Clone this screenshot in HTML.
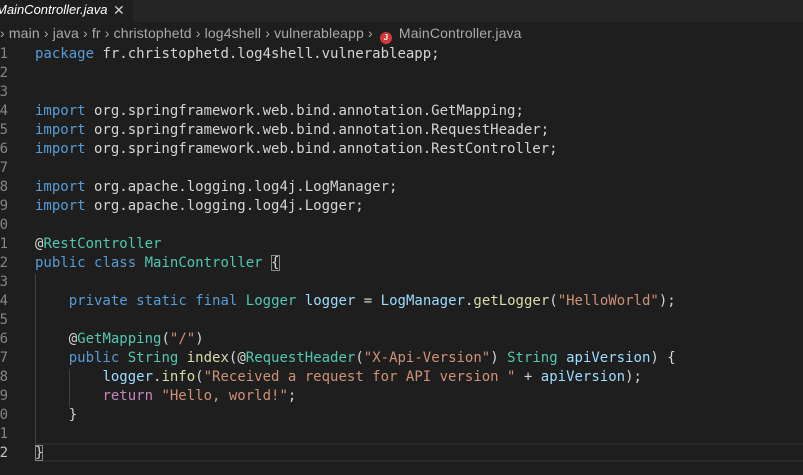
<!DOCTYPE html>
<html><head><meta charset="utf-8"><style>
*{margin:0;padding:0;box-sizing:border-box}
body{width:803px;height:475px;background:#1e1e1e;overflow:hidden;position:relative;font-family:"DejaVu Sans Mono","Liberation Mono",monospace;font-size:14px}
.tabs{position:absolute;left:0;top:0;width:803px;height:22px;background:#252526}
.tab{position:absolute;left:-4px;top:0;width:137px;height:22px;background:#1e1e1e;color:#fff;font:italic 13px "Liberation Sans",sans-serif;line-height:20px;padding-left:0}
.tab .x{position:absolute;left:117px;top:0;font-style:normal;font-size:14px;color:#ccc}
.bc{position:absolute;left:0;top:24px;height:18px;color:#a9a9a9;font:14px "Liberation Sans",sans-serif;letter-spacing:0.15px;line-height:18px;white-space:pre}
.bc .j{display:inline-block;width:12px;height:12px;border-radius:50%;background:#d0393b;vertical-align:-2px;color:#fff;font-size:8px;text-align:center;line-height:12px;font-weight:bold;margin:0 3px}
.ln{position:absolute;right:795px;color:#858585;height:19px;line-height:19px;text-align:right;white-space:pre}
.code{position:absolute;left:35px;height:19px;line-height:19px;white-space:pre;color:#d4d4d4}
.k{color:#569cd6}.t{color:#4ec9b0}.s{color:#ce9178}.f{color:#dcdcaa}.v{color:#9cdcfe}.r{color:#c586c0}
.cur{position:absolute;left:35px;top:443px;width:768px;height:19px;border-top:2px solid #282828;border-bottom:2px solid #282828}
.g{position:absolute;width:1px;background:#404040}
.bb{outline:1px solid #888;outline-offset:-1px}
</style></head><body>
<div class="tabs"><div class="tab">MainController.java<span class="x">✕</span></div></div>
<div class="bc"><span>› main › java › fr › christophetd › log4shell › vulnerableapp › </span><span class="j">J</span><span> MainController.java</span></div>
<div class="cur"></div>
<div class="g" style="left:35px;top:274px;height:170px"></div>
<div class="g" style="left:69px;top:369px;height:38px"></div>
<div id="c"></div>
<script>
var L=[
'<span class="k">package</span> fr.christophetd.log4shell.vulnerableapp;',
'','',
'<span class="k">import</span> org.springframework.web.bind.annotation.GetMapping;',
'<span class="k">import</span> org.springframework.web.bind.annotation.RequestHeader;',
'<span class="k">import</span> org.springframework.web.bind.annotation.RestController;',
'',
'<span class="k">import</span> org.apache.logging.log4j.LogManager;',
'<span class="k">import</span> org.apache.logging.log4j.Logger;',
'',
'@<span class="t">RestController</span>',
'<span class="k">public</span> <span class="k">class</span> <span class="t">MainController</span> <span class="bb">{</span>',
'',
'    <span class="k">private</span> <span class="k">static</span> <span class="k">final</span> <span class="t">Logger</span> <span class="v">logger</span> = <span class="v">LogManager</span>.<span class="f">getLogger</span>(<span class="s">"HelloWorld"</span>);',
'',
'    @<span class="t">GetMapping</span>(<span class="s">"/"</span>)',
'    <span class="k">public</span> <span class="t">String</span> <span class="f">index</span>(@<span class="t">RequestHeader</span>(<span class="s">"X-Api-Version"</span>) <span class="t">String</span> <span class="v">apiVersion</span>) {',
'        <span class="v">logger</span>.<span class="f">info</span>(<span class="s">"Received a request for API version "</span> + <span class="v">apiVersion</span>);',
'        <span class="r">return</span> <span class="s">"Hello, world!"</span>;',
'    }',
'',
'<span class="bb">}</span>'];
var h='';
for(var i=0;i<L.length;i++){var y=44.5+i*19;
h+='<div class="ln" style="top:'+y+'px;'+(i==21?'color:#c6c6c6':'')+'">'+(i+1)+'</div><div class="code" style="top:'+y+'px">'+L[i]+'</div>';}
document.getElementById('c').innerHTML=h;
</script>
</body></html>
